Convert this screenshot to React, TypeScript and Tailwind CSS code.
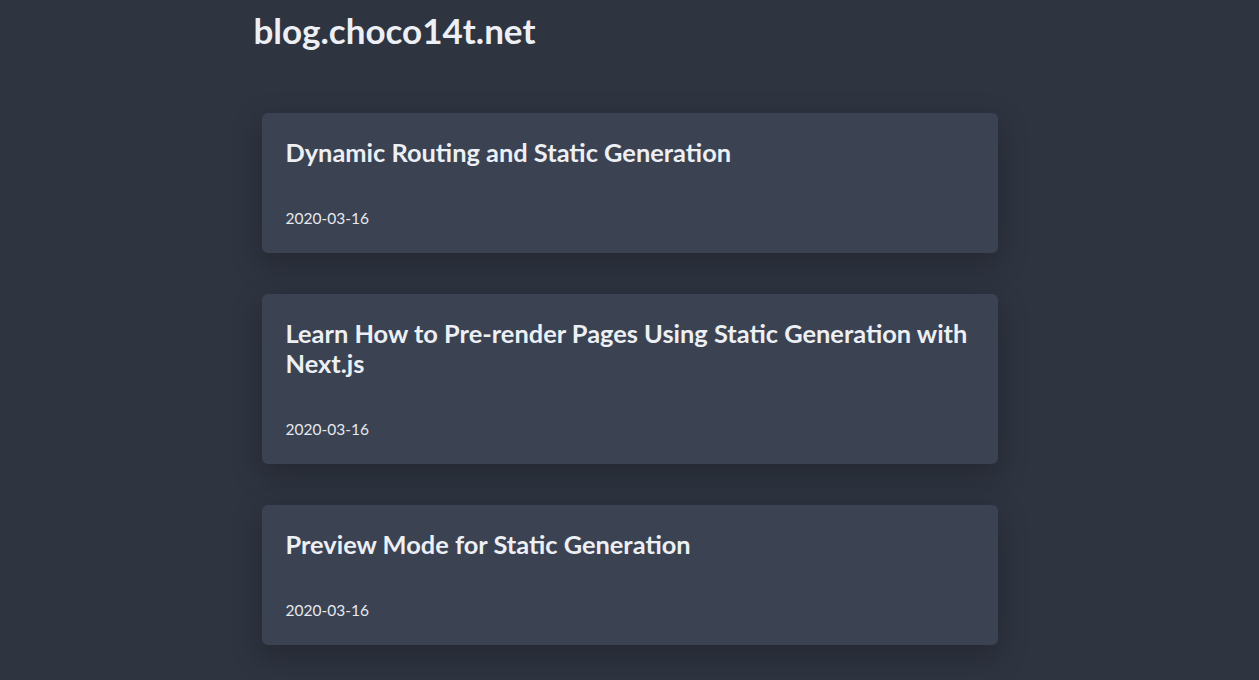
import React from 'react';

interface Post {
  id: string;
  title: string;
  date: string;
}

const posts: Post[] = [
  { id: 'dynamic-routing', title: 'Dynamic Routing and Static Generation', date: '2020-03-16' },
  {
    id: 'pre-rendering',
    title: 'Learn How to Pre-render Pages Using Static Generation with Next.js',
    date: '2020-03-16',
  },
  { id: 'preview-mode', title: 'Preview Mode for Static Generation', date: '2020-03-16' },
];

function PostCard({ post }: { post: Post }) {
  return (
    <article className="mx-4 rounded-md bg-[#3b4252] p-6 shadow-[0_10px_30px_rgba(0,0,0,0.25)]">
      <h2 className="text-[25.4px] font-bold leading-[30px] text-[#eceff4]">{post.title}</h2>
      <time className="mt-[41px] block text-[15.5px] leading-[21px] text-[#e5e9f0]">{post.date}</time>
    </article>
  );
}

export default function App() {
  return (
    <div
      className="min-h-screen bg-[#2e3440] text-[#eceff4]"
      style={{ fontFamily: 'Lato, "Noto Sans", sans-serif' }}
    >
      <div className="mx-auto max-w-3xl">
        <header className="px-2 pt-[4px]">
          <h1 className="text-[35px] font-bold leading-[52px]">blog.choco14t.net</h1>
        </header>
        <main className="mt-[57px] flex flex-col gap-[41px] pb-10">
          {posts.map((post) => (
            <PostCard key={post.id} post={post} />
          ))}
        </main>
      </div>
    </div>
  );
}
